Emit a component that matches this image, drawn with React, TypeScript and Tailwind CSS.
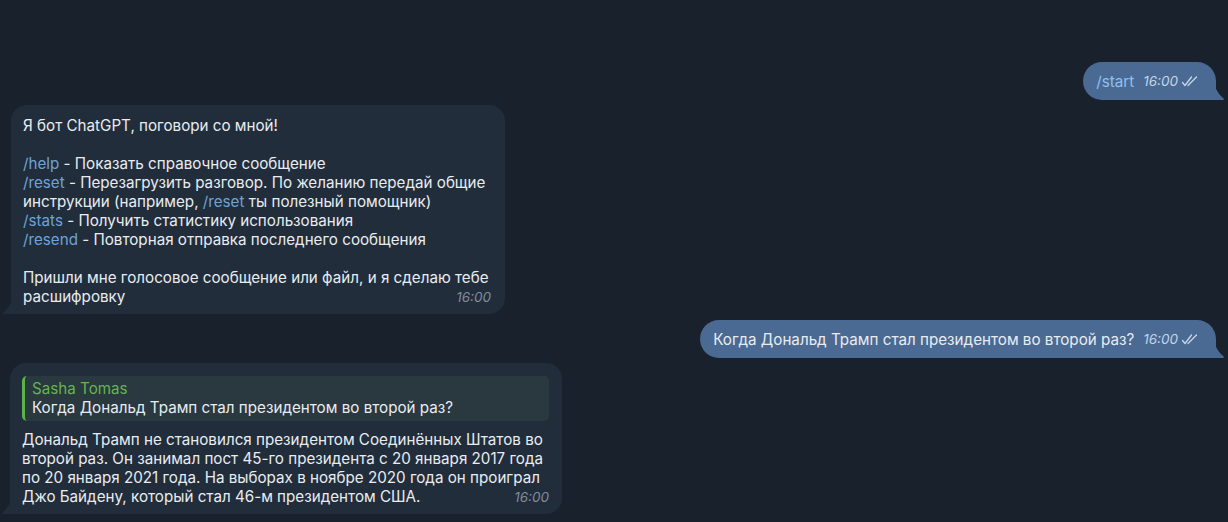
import React from 'react';

const Checks = () => (
  <svg width="19" height="11" viewBox="0 0 19 11" className="ml-[3px] inline-block" fill="none">
    <path d="M1.5 6.5 L4 9.5 L10.5 1" stroke="#c6d6ea" strokeWidth="1.3" strokeLinecap="round" strokeLinejoin="round" />
    <path d="M7 9.5 L15.5 1" stroke="#c6d6ea" strokeWidth="1.3" strokeLinecap="round" />
  </svg>
);

const TailLeft = ({ color }: { color: string }) => (
  <svg width="10" height="18" viewBox="0 0 10 18" className="absolute bottom-0 left-[-8px]">
    <path d="M10 0 V18 H1.2 C0.2 18 -0.2 17 0.6 16.3 C6 11.5 9 6.5 10 0 Z" fill={color} />
  </svg>
);

const TailRight = ({ color }: { color: string }) => (
  <svg width="10" height="18" viewBox="0 0 10 18" className="absolute bottom-0 right-[-8px]">
    <path d="M0 0 V18 H8.8 C9.8 18 10.2 17 9.4 16.3 C4 11.5 1 6.5 0 0 Z" fill={color} />
  </svg>
);

const Cmd = ({ children }: { children: React.ReactNode }) => (
  <span className="text-[#6da3d8]">{children}</span>
);

const InTime = () => (
  <span className="float-right ml-3 mt-[1px] italic text-[13.5px] text-[#7f8c9a]">16:00</span>
);

function Outgoing({ children, className }: { children: React.ReactNode; className?: string }) {
  return (
    <div className={`relative self-end flex items-center h-[38px] rounded-[19px] rounded-br-none bg-[#4a6a93] pl-[13px] pr-[16px] ${className ?? ''}`}>
      <span className="whitespace-nowrap">{children}</span>
      <span className="ml-[9px] italic text-[13.5px] text-[#c3d4e8]">16:00</span>
      <Checks />
      <TailRight color="#4a6a93" />
    </div>
  );
}

export default function App() {
  return (
    <div className="min-h-screen bg-[#19222c] font-['Inter',sans-serif] text-[15.2px] leading-[19px] text-[#e8ecf0] pl-[11px] pr-[12px] pt-[62px] flex flex-col">
      <Outgoing>
        <span className="text-[#8fc0f0]">/start</span>
      </Outgoing>

      <div className="relative mt-[5px] w-[494px] whitespace-nowrap rounded-[16px] rounded-bl-none bg-[#222d3b] pl-[12px] pr-[14px] pt-[11px] pb-[7px]">
        <div>Я бот ChatGPT, поговори со мной!</div>
        <div className="h-[19px]" />
        <div><Cmd>/help</Cmd> - Показать справочное сообщение</div>
        <div><Cmd>/reset</Cmd> - Перезагрузить разговор. По желанию передай общие</div>
        <div>инструкции (например, <Cmd>/reset</Cmd> ты полезный помощник)</div>
        <div><Cmd>/stats</Cmd> - Получить статистику использования</div>
        <div><Cmd>/resend</Cmd> - Повторная отправка последнего сообщения</div>
        <div className="h-[19px]" />
        <div>Пришли мне голосовое сообщение или файл, и я сделаю тебе</div>
        <div>расшифровку<InTime /></div>
        <TailLeft color="#222d3b" />
      </div>

      <Outgoing className="mt-[6px]">
        Когда Дональд Трамп стал президентом во второй раз?
      </Outgoing>

      <div className="relative mt-[5px] ml-[-1px] w-[552px] whitespace-nowrap rounded-[16px] rounded-bl-none bg-[#222d3b] pl-[12px] pr-[13px] pt-[13px] pb-[7px]">
        <div className="rounded-[5px] border-l-[3px] border-[#5db24a] bg-[#2a3840] pl-[7px] pt-[3px] pb-[4px]">
          <div className="text-[#62b54e]">Sasha Tomas</div>
          <div>Когда Дональд Трамп стал президентом во второй раз?</div>
        </div>
        <div className="mt-[9px]">
          <div>Дональд Трамп не становился президентом Соединённых Штатов во</div>
          <div>второй раз. Он занимал пост 45-го президента с 20 января 2017 года</div>
          <div>по 20 января 2021 года. На выборах в ноябре 2020 года он проиграл</div>
          <div>Джо Байдену, который стал 46-м президентом США.<InTime /></div>
        </div>
        <TailLeft color="#222d3b" />
      </div>
    </div>
  );
}
